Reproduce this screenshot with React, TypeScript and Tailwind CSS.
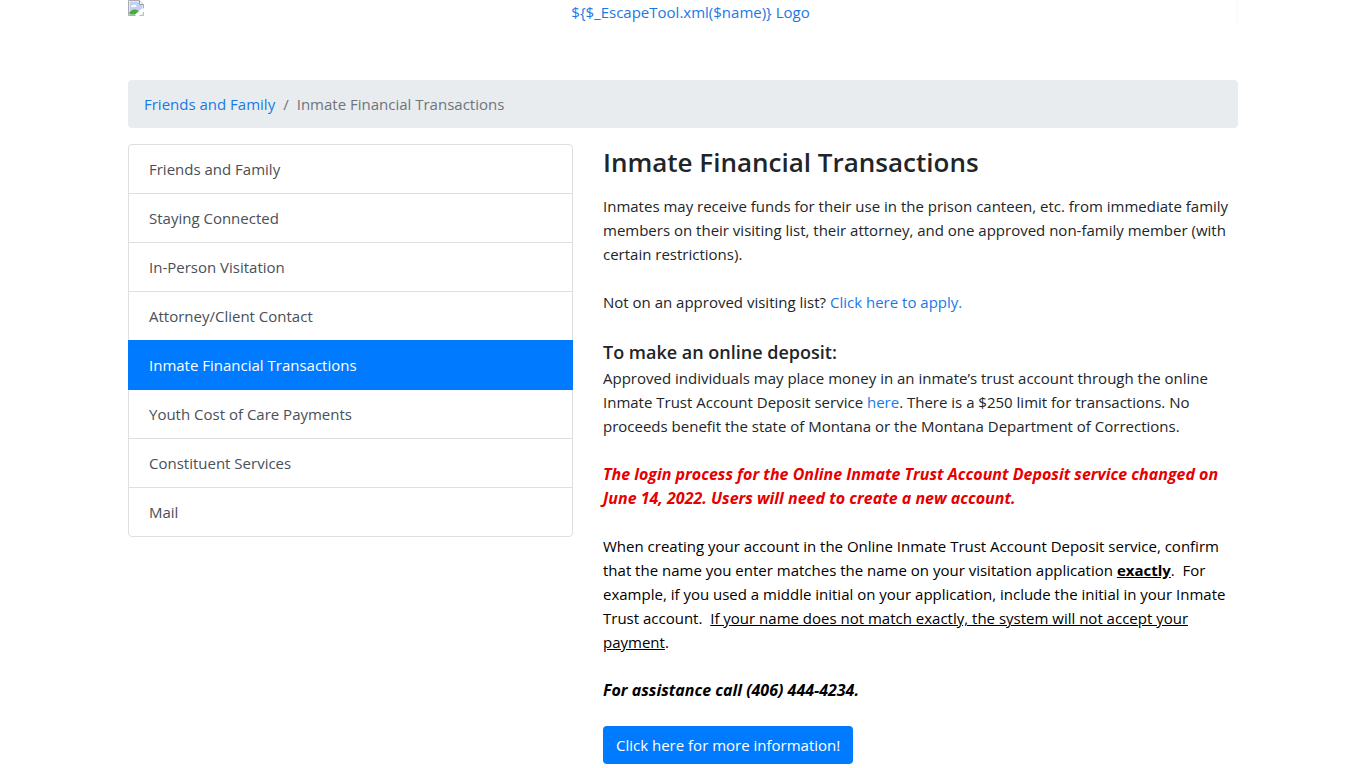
import clsx from "clsx";

interface NavItem {
  label: string;
  active?: boolean;
}

const navItems: NavItem[] = [
  { label: "Friends and Family" },
  { label: "Staying Connected" },
  { label: "In-Person Visitation" },
  { label: "Attorney/Client Contact" },
  { label: "Inmate Financial Transactions", active: true },
  { label: "Youth Cost of Care Payments" },
  { label: "Constituent Services" },
  { label: "Mail" },
];

const linkClass = "text-[#1a79e6] hover:underline";

function BrokenImageIcon() {
  return (
    <svg className="h-4 w-4 shrink-0" viewBox="0 0 16 16" aria-hidden="true">
      <path d="M0.5 0.5H11.5L15.5 4.5V15.5H0.5Z" fill="#fff" stroke="#a9abad" />
      <path d="M1.5 1.5H11V5H14.5V8L7 14.5H1.5Z" fill="#c3d0f5" />
      <path d="M3 7C3 5.4 4.4 4.8 5.2 5.4C6 3.8 8.6 4.4 8.4 7Z" fill="#fff" />
      <path d="M1.5 14.5V12.5C3 10 6 8.8 8.4 9.8L11 11L7 14.5Z" fill="#4fa83d" />
      <path d="M11.5 0.5V4.5H15.5" fill="#f2f3f5" stroke="#9a9c9f" />
      <path d="M7 16L16 8V11.5L11 16Z" fill="#fff" />
      <path d="M12 15.5H15.5V12.5Z" fill="#d3ddec" />
    </svg>
  );
}

function Header() {
  return (
    <header className="mb-13">
      <a href="#" className="flex h-7 items-start border-r border-[#fafafa] text-[#1a79e6]">
        <BrokenImageIcon />
        <span className="grow text-center">{"${$_EscapeTool.xml($name)} Logo"}</span>
      </a>
    </header>
  );
}

function Breadcrumb() {
  return (
    <nav aria-label="breadcrumb" className="mb-4 rounded bg-[#e9ecef] px-4 py-3">
      <ol className="flex gap-2 text-[#6c757d]">
        <li>
          <a href="#" className="text-[#1a79e6] hover:underline">Friends and Family</a>
        </li>
        <li aria-hidden="true">/</li>
        <li aria-current="page">Inmate Financial Transactions</li>
      </ol>
    </nav>
  );
}

function SideNav() {
  return (
    <nav aria-label="Section">
      <ul>
        {navItems.map((item, i) => (
          <li key={item.label} className={clsx(i > 0 && "-mt-px")}>
            <a
              href="#"
              className={clsx(
                "block border px-5 py-3",
                i === 0 && "rounded-t",
                i === navItems.length - 1 && "rounded-b",
                item.active
                  ? "relative border-[#007bff] bg-[#007bff] text-white"
                  : "border-[#dfdfdf] text-[#495057] hover:bg-gray-50"
              )}
            >
              {item.label}
            </a>
          </li>
        ))}
      </ul>
    </nav>
  );
}

export default function App() {
  return (
    <div className="mx-auto max-w-[1140px] px-[15px] font-['Open_Sans',sans-serif] text-[15px] leading-6 text-[#212529]">
      <Header />
      <Breadcrumb />

      <div className="grid grid-cols-12 gap-[30px]">
        <div className="col-span-5">
          <SideNav />
        </div>

        <main className="col-span-7">
          <h1 className="mb-3.5 text-[26px] leading-9 font-semibold">Inmate Financial Transactions</h1>

          <p className="mb-6">
            Inmates may receive funds for their use in the prison canteen, etc. from immediate family
            members on their visiting list, their attorney, and one approved non-family member (with
            certain restrictions).
          </p>
          <p className="mb-6">
            Not on an approved visiting list? <a href="#" className={linkClass}>Click here to apply.</a>
          </p>

          <h2 className="text-lg leading-7 font-semibold">To make an online deposit:</h2>
          <p className="mb-6">
            Approved individuals may place money in an inmate’s trust account through the online
            Inmate Trust Account Deposit service <a href="#" className={linkClass}>here</a>. There is a
            $250 limit for transactions. No proceeds benefit the state of Montana or the Montana
            Department of Corrections.
          </p>

          <p className="mb-6 text-base leading-6 font-bold text-[#e60000] italic">
            The login process for the Online Inmate Trust Account Deposit service changed on June 14,
            2022. Users will need to create a new account.
          </p>

          <p className="mb-6 text-black">
            When creating your account in the Online Inmate Trust Account Deposit service, confirm
            that the name you enter matches the name on your visitation
            application <strong className="underline">exactly</strong>.&nbsp; For example, if you used a
            middle initial on your application, include the initial in your Inmate Trust
            account.&nbsp; <u>If your name does not match exactly, the system will not accept your
            payment</u>.
          </p>

          <p className="mb-6 text-base leading-6 font-bold text-black italic">
            For assistance call (406) 444-4234.
          </p>

          <button type="button" className="rounded bg-[#007bff] px-[13px] py-[7px] text-white hover:bg-blue-600">
            Click here for more information!
          </button>
        </main>
      </div>
    </div>
  );
}
